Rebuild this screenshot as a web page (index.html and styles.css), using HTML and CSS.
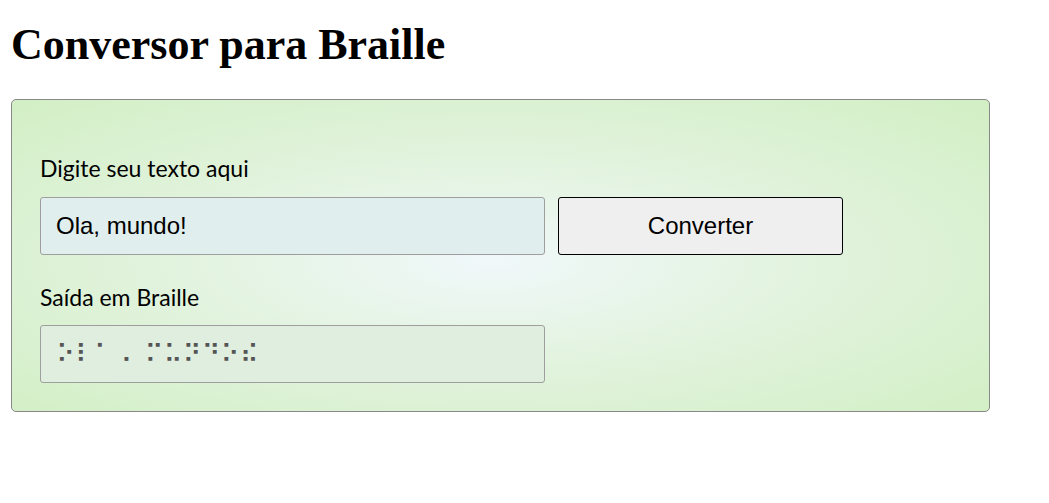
FILE: index.html
```html
<!DOCTYPE html>
<html lang="pt-BR">
<head>
<meta charset="utf-8">
<title>Conversor para Braille</title>
<link rel="stylesheet" href="styles.css">
</head>
<body>
  <h1 class="title">Conversor para Braille</h1>
  <form class="panel">
    <label class="label label-first" for="texto">Digite seu texto aqui</label>
    <div class="row">
      <input class="field field-input" id="texto" type="text" value="Ola, mundo!">
      <button class="btn" type="button">Converter</button>
    </div>
    <label class="label label-second" for="saida">Saída em Braille</label>
    <input class="field field-output" id="saida" type="text" value="⠕⠇⠁⠠ ⠍⠥⠝⠙⠕⠮" disabled>
  </form>
</body>
</html>
```

FILE: styles.css
```css
html, body {
  margin: 0;
  padding: 0;
  background: #ffffff;
}

body {
  padding: 0 11px;
  font-family: "Liberation Serif", "Times New Roman", serif;
  color: #000;
}

.title {
  margin: 20px 0 29px;
  font-family: "Liberation Serif", "Times New Roman", serif;
  font-weight: bold;
  font-size: 44px;
  line-height: 50px;
}

.panel {
  box-sizing: border-box;
  width: 979px;
  margin: 0;
  padding: 56px 28px 28px;
  border: 1px solid #888;
  border-radius: 5px;
  background: radial-gradient(ellipse farthest-corner at 49% 52%, #f0f8fa 0%, #e2f3de 45%, #d2efc4 100%);
}

.label {
  display: block;
  font-family: "Lato", "Open Sans", sans-serif;
  font-size: 23px;
  line-height: 25px;
  color: #000;
}

.label-first {
  margin-bottom: 16px;
}

.label-second {
  margin-top: 30px;
  margin-bottom: 15px;
}

.row {
  display: flex;
  gap: 13px;
}

.field {
  box-sizing: border-box;
  display: block;
  width: 505px;
  height: 58px;
  margin: 0;
  padding: 0 15px;
  border: 1px solid #9e9e9e;
  border-radius: 3px;
  font-family: "Liberation Sans", Arial, sans-serif;
  font-size: 24px;
  color: #000;
  outline: none;
}

.field-input {
  background: #e0eeee;
}

.field-output {
  background: #e0eee0;
  color: #555;
  font-family: "DejaVu Sans", sans-serif;
  font-size: 26px;
  word-spacing: 4px;
}

.btn {
  box-sizing: border-box;
  width: 285px;
  height: 58px;
  margin: 0;
  padding: 0;
  border: 1px solid #000;
  border-radius: 3px;
  background: #efefef;
  font-family: "Liberation Sans", Arial, sans-serif;
  font-size: 24px;
  color: #000;
}
```
